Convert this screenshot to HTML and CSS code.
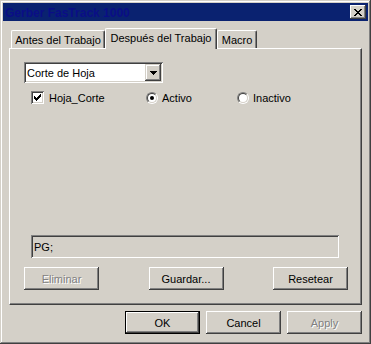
FILE: index.html
```html
<!DOCTYPE html>
<html>
<head>
<meta charset="utf-8">
<link rel="stylesheet" href="styles.css">
</head>
<body>
<div class="window">
  <div class="titlebar">
    <span class="title">Gerber FasTrack 1000</span>
    <span class="close">
      <svg width="8" height="7" viewBox="0 0 8 7" shape-rendering="crispEdges"><path fill="#000" d="M0 0h2v1h-2zM6 0h2v1h-2zM1 1h2v1h-2zM5 1h2v1h-2zM2 2h4v1h-4zM3 3h2v1h-2zM2 4h4v1h-4zM1 5h2v1h-2zM5 5h2v1h-2zM0 6h2v1h-2zM6 6h2v1h-2z"/></svg>
    </span>
  </div>
  <div class="client">
    <div class="tabs">
      <div class="tab tab-first">Antes del Trabajo</div>
      <div class="tab tab-active">Después del Trabajo</div>
      <div class="tab tab-last">Macro</div>
    </div>
    <div class="panel">
      <div class="combo">
        <span class="combo-text">Corte de Hoja</span>
        <span class="combo-btn">
          <svg width="7" height="4" viewBox="0 0 7 4" shape-rendering="crispEdges"><path fill="#000" d="M0 0h7v1h-7zM1 1h5v1h-5zM2 2h3v1h-3zM3 3h1v1h-1z"/></svg>
        </span>
      </div>
      <div class="options">
        <div class="opt opt-check">
          <span class="checkbox">
            <svg width="7" height="7" viewBox="0 0 7 7" shape-rendering="crispEdges"><path fill="#000" d="M6 0h1v1h-1zM5 1h2v1h-2zM0 2h1v1h-1zM4 2h3v1h-3zM0 3h2v1h-2zM3 3h3v1h-3zM0 4h5v1h-5zM1 5h3v1h-3zM2 6h1v1h-1z"/></svg>
          </span>
          <span>Hoja_Corte</span>
        </div>
        <div class="opt opt-radio1">
          <span class="radio"><span class="radio-in on"></span></span>
          <span>Activo</span>
        </div>
        <div class="opt">
          <span class="radio"><span class="radio-in"></span></span>
          <span>Inactivo</span>
        </div>
      </div>
      <div class="spacer"></div>
      <div class="readout">PG;</div>
      <div class="actions">
        <div class="btn disabled">Eliminar</div>
        <div class="btn">Guardar...</div>
        <div class="btn">Resetear</div>
      </div>
    </div>
    <div class="footer">
      <div class="btn default">OK</div>
      <div class="btn">Cancel</div>
      <div class="btn disabled">Apply</div>
    </div>
  </div>
</div>
</body>
</html>
```

FILE: styles.css
```css
html, body {
  margin: 0;
  padding: 0;
  background: #d4d0c8;
}

body {
  font-family: "Liberation Sans", Arial, sans-serif;
  font-size: 11px;
  color: #000;
}

.window {
  width: 371px;
  height: 344px;
  box-sizing: border-box;
  padding: 3px;
  background: #d4d0c8;
  display: flex;
  flex-direction: column;
  box-shadow: inset -1px -1px #404040, inset 1px 1px #d4d0c8, inset -2px -2px #808080, inset 2px 2px #ffffff;
}

.titlebar {
  height: 18px;
  flex: none;
  background: #0a2270;
  display: flex;
  align-items: center;
  justify-content: space-between;
  padding: 0 2px 0 2px;
}

.title {
  font-weight: bold;
  font-size: 12px;
  color: #0a0e86;
  margin-top: 1px;
}

.close {
  width: 16px;
  height: 14px;
  box-sizing: border-box;
  background: #d4d0c8;
  display: flex;
  align-items: center;
  justify-content: center;
  box-shadow: inset -1px -1px #404040, inset 1px 1px #ffffff, inset -2px -2px #808080;
}

.client {
  flex: 1;
  display: flex;
  flex-direction: column;
  padding: 7px 6px 0 6px;
}

.tabs {
  height: 20px;
  flex: none;
  display: flex;
  align-items: flex-end;
  padding-left: 2px;
}

.tab {
  height: 18px;
  box-sizing: border-box;
  border-top: 1px solid #fff;
  border-left: 1px solid #fff;
  border-right: 1px solid #404040;
  border-top-left-radius: 2px;
  border-top-right-radius: 2px;
  box-shadow: inset -1px 0 #808080;
  background: #d4d0c8;
  display: flex;
  align-items: center;
  justify-content: center;
  padding-top: 1px;
}

.tab-first { width: 94px; }
.tab-last { width: 40px; }

.tab-active {
  width: 112px;
  height: 21px;
  margin-bottom: -1px;
  position: relative;
  z-index: 1;
  padding-top: 0;
  padding-bottom: 2px;
}

.panel {
  height: 257px;
  flex: none;
  box-sizing: border-box;
  border-top: 1px solid #fff;
  border-left: 1px solid #fff;
  border-right: 1px solid #404040;
  border-bottom: 1px solid #404040;
  box-shadow: inset -1px -1px #808080;
  display: flex;
  flex-direction: column;
  padding: 13px 13px 14px 14px;
}

.combo {
  width: 139px;
  height: 21px;
  box-sizing: border-box;
  padding: 2px;
  background: #fff;
  display: flex;
  align-items: center;
  justify-content: space-between;
  box-shadow: inset 1px 1px #808080, inset -1px -1px #fff, inset 2px 2px #404040, inset -2px -2px #d4d0c8;
}

.combo-text {
  margin-left: 1px;
}

.combo-btn {
  width: 16px;
  height: 17px;
  box-sizing: border-box;
  background: #d4d0c8;
  display: flex;
  align-items: center;
  justify-content: center;
  box-shadow: inset -1px -1px #404040, inset 1px 1px #d4d0c8, inset -2px -2px #808080, inset 2px 2px #fff;
}

.options {
  margin-top: 8px;
  height: 13px;
  display: flex;
  align-items: center;
  padding-left: 7px;
}

.opt {
  display: flex;
  align-items: center;
}

.opt-check {
  width: 115px;
  gap: 5px;
}

.opt-radio1 {
  width: 91px;
}

.opt .radio {
  margin-right: 4px;
}

.checkbox {
  width: 13px;
  height: 13px;
  box-sizing: border-box;
  background: #fff;
  display: flex;
  align-items: center;
  justify-content: center;
  box-shadow: inset 1px 1px #808080, inset -1px -1px #fff, inset 2px 2px #404040, inset -2px -2px #d4d0c8;
}

.radio {
  width: 12px;
  height: 12px;
  box-sizing: border-box;
  border-radius: 50%;
  border: 1px solid;
  border-color: #808080 #fff #fff #808080;
  display: flex;
}

.radio-in {
  flex: 1;
  border-radius: 50%;
  border: 1px solid;
  border-color: #404040 #d4d0c8 #d4d0c8 #404040;
  background: #fff;
  display: flex;
  align-items: center;
  justify-content: center;
}

.radio-in.on::after {
  content: "";
  width: 4px;
  height: 4px;
  border-radius: 50%;
  background: #000;
}

.spacer {
  flex: 1;
}

.readout {
  margin-left: 7px;
  width: 308px;
  height: 23px;
  box-sizing: border-box;
  padding: 2px 3px;
  display: flex;
  align-items: center;
  background: #d4d0c8;
  box-shadow: inset 1px 1px #808080, inset -1px -1px #fff, inset 2px 2px #404040, inset -2px -2px #d4d0c8;
}

.actions {
  margin-top: 9px;
  display: flex;
  justify-content: space-between;
}

.btn {
  width: 75px;
  height: 23px;
  box-sizing: border-box;
  background: #d4d0c8;
  display: flex;
  align-items: center;
  justify-content: center;
  box-shadow: inset -1px -1px #404040, inset 1px 1px #fff, inset -2px -2px #808080, inset 2px 2px #d4d0c8;
}

.btn.default {
  box-shadow: inset 0 0 0 1px #000, inset -2px -2px #404040, inset 2px 2px #fff, inset -3px -3px #808080;
}

.btn.disabled {
  color: #808080;
  text-shadow: 1px 1px 0 #fff;
}

.footer {
  margin-top: 6px;
  display: flex;
  justify-content: flex-end;
  gap: 6px;
}
```
